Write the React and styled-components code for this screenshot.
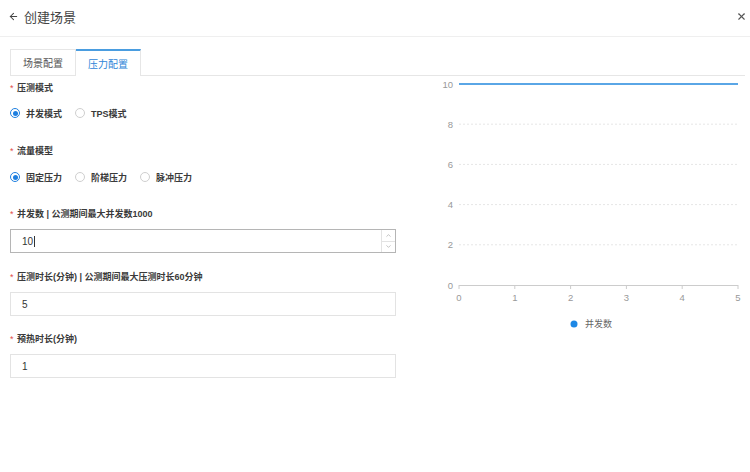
import React from "react";
import styled, { createGlobalStyle } from "styled-components";
import { ArrowLeft, X, ChevronUp, ChevronDown } from "lucide-react";

const Global = createGlobalStyle`
  html, body { margin: 0; padding: 0; background: #fff; }
  body { font-family: "Liberation Sans", "Noto Sans CJK SC", sans-serif; color: #333; }
  * { box-sizing: border-box; }
`;

const Page = styled.div`
  width: 750px;
  height: 472px;
  background: #fff;
  overflow: hidden;
`;

const Header = styled.div`
  height: 37px;
  display: flex;
  align-items: center;
  padding: 0 3px 4px 8px;
  border-bottom: 1px solid #efefef;
`;

const Title = styled.div`
  flex: 1;
  display: flex;
  align-items: center;
  gap: 5px;
  font-size: 13px;
  color: #444;
`;

const CloseBtn = styled.div`
  display: flex;
  color: #555;
`;

const TabBar = styled.div`
  display: flex;
  margin: 12px 5px 0 10px;
  border-bottom: 1px solid #e6e6e6;
`;

const Tab = styled.div`
  height: 27px;
  padding: 0 12px;
  display: flex;
  align-items: center;
  font-size: 10px;
  border: 1px solid #e6e6e6;
  border-bottom: none;
  border-top: ${(p) => (p.$active ? "2px solid #4a9de0" : "1px solid #e6e6e6")};
  border-left: ${(p) => (p.$active ? "none" : "1px solid #e6e6e6")};
  color: ${(p) => (p.$active ? "#2f86d8" : "#555")};
  background: #fff;
  margin-bottom: -1px;
  ${(p) => (p.$active ? "" : "border-bottom: 1px solid #e6e6e6;")}
`;

const Body = styled.div`
  display: flex;
`;

const Form = styled.div`
  width: 386px;
  margin-left: 10px;
  padding-top: 6px;
`;

const FormItem = styled.div`
  margin-bottom: ${(p) => p.$mb}px;
`;

const Label = styled.div`
  height: 12px;
  line-height: 12px;
  font-size: 9px;
  font-weight: bold;
  color: #3a3a3a;
  margin-bottom: ${(p) => p.$mb}px;
  display: flex;
  align-items: center;
`;

const Star = styled.span`
  color: #e24b4b;
  font-weight: normal;
  width: 7px;
`;

const RadioRow = styled.div`
  display: flex;
  align-items: center;
  height: 14px;
  gap: 13px;
`;

const RadioOpt = styled.div`
  display: flex;
  align-items: center;
  gap: 6px;
  font-size: 9px;
  font-weight: bold;
  color: #3a3a3a;
`;

const Circle = styled.span`
  width: 10px;
  height: 10px;
  border-radius: 50%;
  border: 1px solid ${(p) => (p.$on ? "#1e7fe0" : "#cfcfcf")};
  display: flex;
  align-items: center;
  justify-content: center;
  background: #fff;
  &::after {
    content: "";
    width: 5px;
    height: 5px;
    border-radius: 50%;
    background: ${(p) => (p.$on ? "#1e7fe0" : "transparent")};
  }
`;

const InputBox = styled.div`
  height: 24px;
  border: 1px solid ${(p) => (p.$focus ? "#b5b5b5" : "#e3e3e3")};
  display: flex;
  align-items: center;
  font-size: 10px;
  color: #333;
`;

const InputText = styled.div`
  flex: 1;
  padding-left: 11px;
  display: flex;
  align-items: center;
`;

const Caret = styled.span`
  display: inline-block;
  width: 1px;
  height: 11px;
  background: #333;
  margin-left: 1px;
`;

const Spinner = styled.div`
  width: 14px;
  height: 100%;
  border-left: 1px solid #e3e3e3;
  display: flex;
  flex-direction: column;
`;

const SpinBtn = styled.div`
  flex: 1;
  display: flex;
  align-items: center;
  justify-content: center;
  color: #999;
  & + & { border-top: 1px solid #e3e3e3; }
`;

const ChartArea = styled.div`
  flex: 1;
`;

const radio = (opts, sel) => (
  <RadioRow>
    {opts.map((o, i) => (
      <RadioOpt key={o}>
        <Circle $on={i === sel} />
        {o}
      </RadioOpt>
    ))}
  </RadioRow>
);

function Chart() {
  const x0 = 63, xs = 55.8, y0 = 209, ys = 20.1;
  const X = (v) => x0 + v * xs;
  const Y = (v) => y0 - v * ys;
  return (
    <svg width="354" height="270" viewBox="0 0 354 270">
      {[2, 4, 6, 8].map((v) => (
        <line key={v} x1={x0} x2={X(5)} y1={Y(v)} y2={Y(v)} stroke="#e6e6e6" strokeDasharray="2 2" strokeWidth="1" />
      ))}
      {[0, 2, 4, 6, 8, 10].map((v) => (
        <text key={v} x={57} y={Y(v) + 3.5} textAnchor="end" fontSize="9.5" fill="#999" fontFamily="Liberation Sans, sans-serif">{v}</text>
      ))}
      <line x1={x0} x2={X(5)} y1={y0 + 0.5} y2={y0 + 0.5} stroke="#ccc" />
      {[0, 1, 2, 3, 4, 5].map((v) => (
        <g key={v}>
          <line x1={X(v)} x2={X(v)} y1={y0} y2={y0 + 4} stroke="#ccc" />
          <text x={X(v)} y={y0 + 15.5} textAnchor="middle" fontSize="9.5" fill="#999" fontFamily="Liberation Sans, sans-serif">{v}</text>
        </g>
      ))}
      <line x1={x0} x2={X(5)} y1={Y(10)} y2={Y(10)} stroke="#5aa6e6" strokeWidth="2" />
      <circle cx="178" cy="248" r="3.5" fill="#1e88e5" />
      <text x="189" y="251" fontSize="9" fill="#666" fontFamily="Liberation Sans, Noto Sans CJK SC, sans-serif">并发数</text>
    </svg>
  );
}

export default function App() {
  return (
    <Page>
      <Global />
      <Header>
        <Title>
          <ArrowLeft size={11} strokeWidth={2.2} color="#444" />
          创建场景
        </Title>
        <CloseBtn>
          <X size={11} strokeWidth={2.4} />
        </CloseBtn>
      </Header>
      <TabBar>
        <Tab>场景配置</Tab>
        <Tab $active>压力配置</Tab>
      </TabBar>
      <Body>
        <Form>
          <FormItem $mb={25}>
            <Label $mb={12}><Star>*</Star>压测模式</Label>
            {radio(["并发模式", "TPS模式"], 0)}
          </FormItem>
          <FormItem $mb={24}>
            <Label $mb={13}><Star>*</Star>流量模型</Label>
            {radio(["固定压力", "阶梯压力", "脉冲压力"], 0)}
          </FormItem>
          <FormItem $mb={18}>
            <Label $mb={9}><Star>*</Star>并发数 | 公测期间最大并发数1000</Label>
            <InputBox $focus>
              <InputText>10<Caret /></InputText>
              <Spinner>
                <SpinBtn><ChevronUp size={7} strokeWidth={2} /></SpinBtn>
                <SpinBtn><ChevronDown size={7} strokeWidth={2} /></SpinBtn>
              </Spinner>
            </InputBox>
          </FormItem>
          <FormItem $mb={17}>
            <Label $mb={9}><Star>*</Star>压测时长(分钟) | 公测期间最大压测时长60分钟</Label>
            <InputBox><InputText>5</InputText></InputBox>
          </FormItem>
          <FormItem $mb={0}>
            <Label $mb={9}><Star>*</Star>预热时长(分钟)</Label>
            <InputBox><InputText>1</InputText></InputBox>
          </FormItem>
        </Form>
        <ChartArea>
          <Chart />
        </ChartArea>
      </Body>
    </Page>
  );
}
